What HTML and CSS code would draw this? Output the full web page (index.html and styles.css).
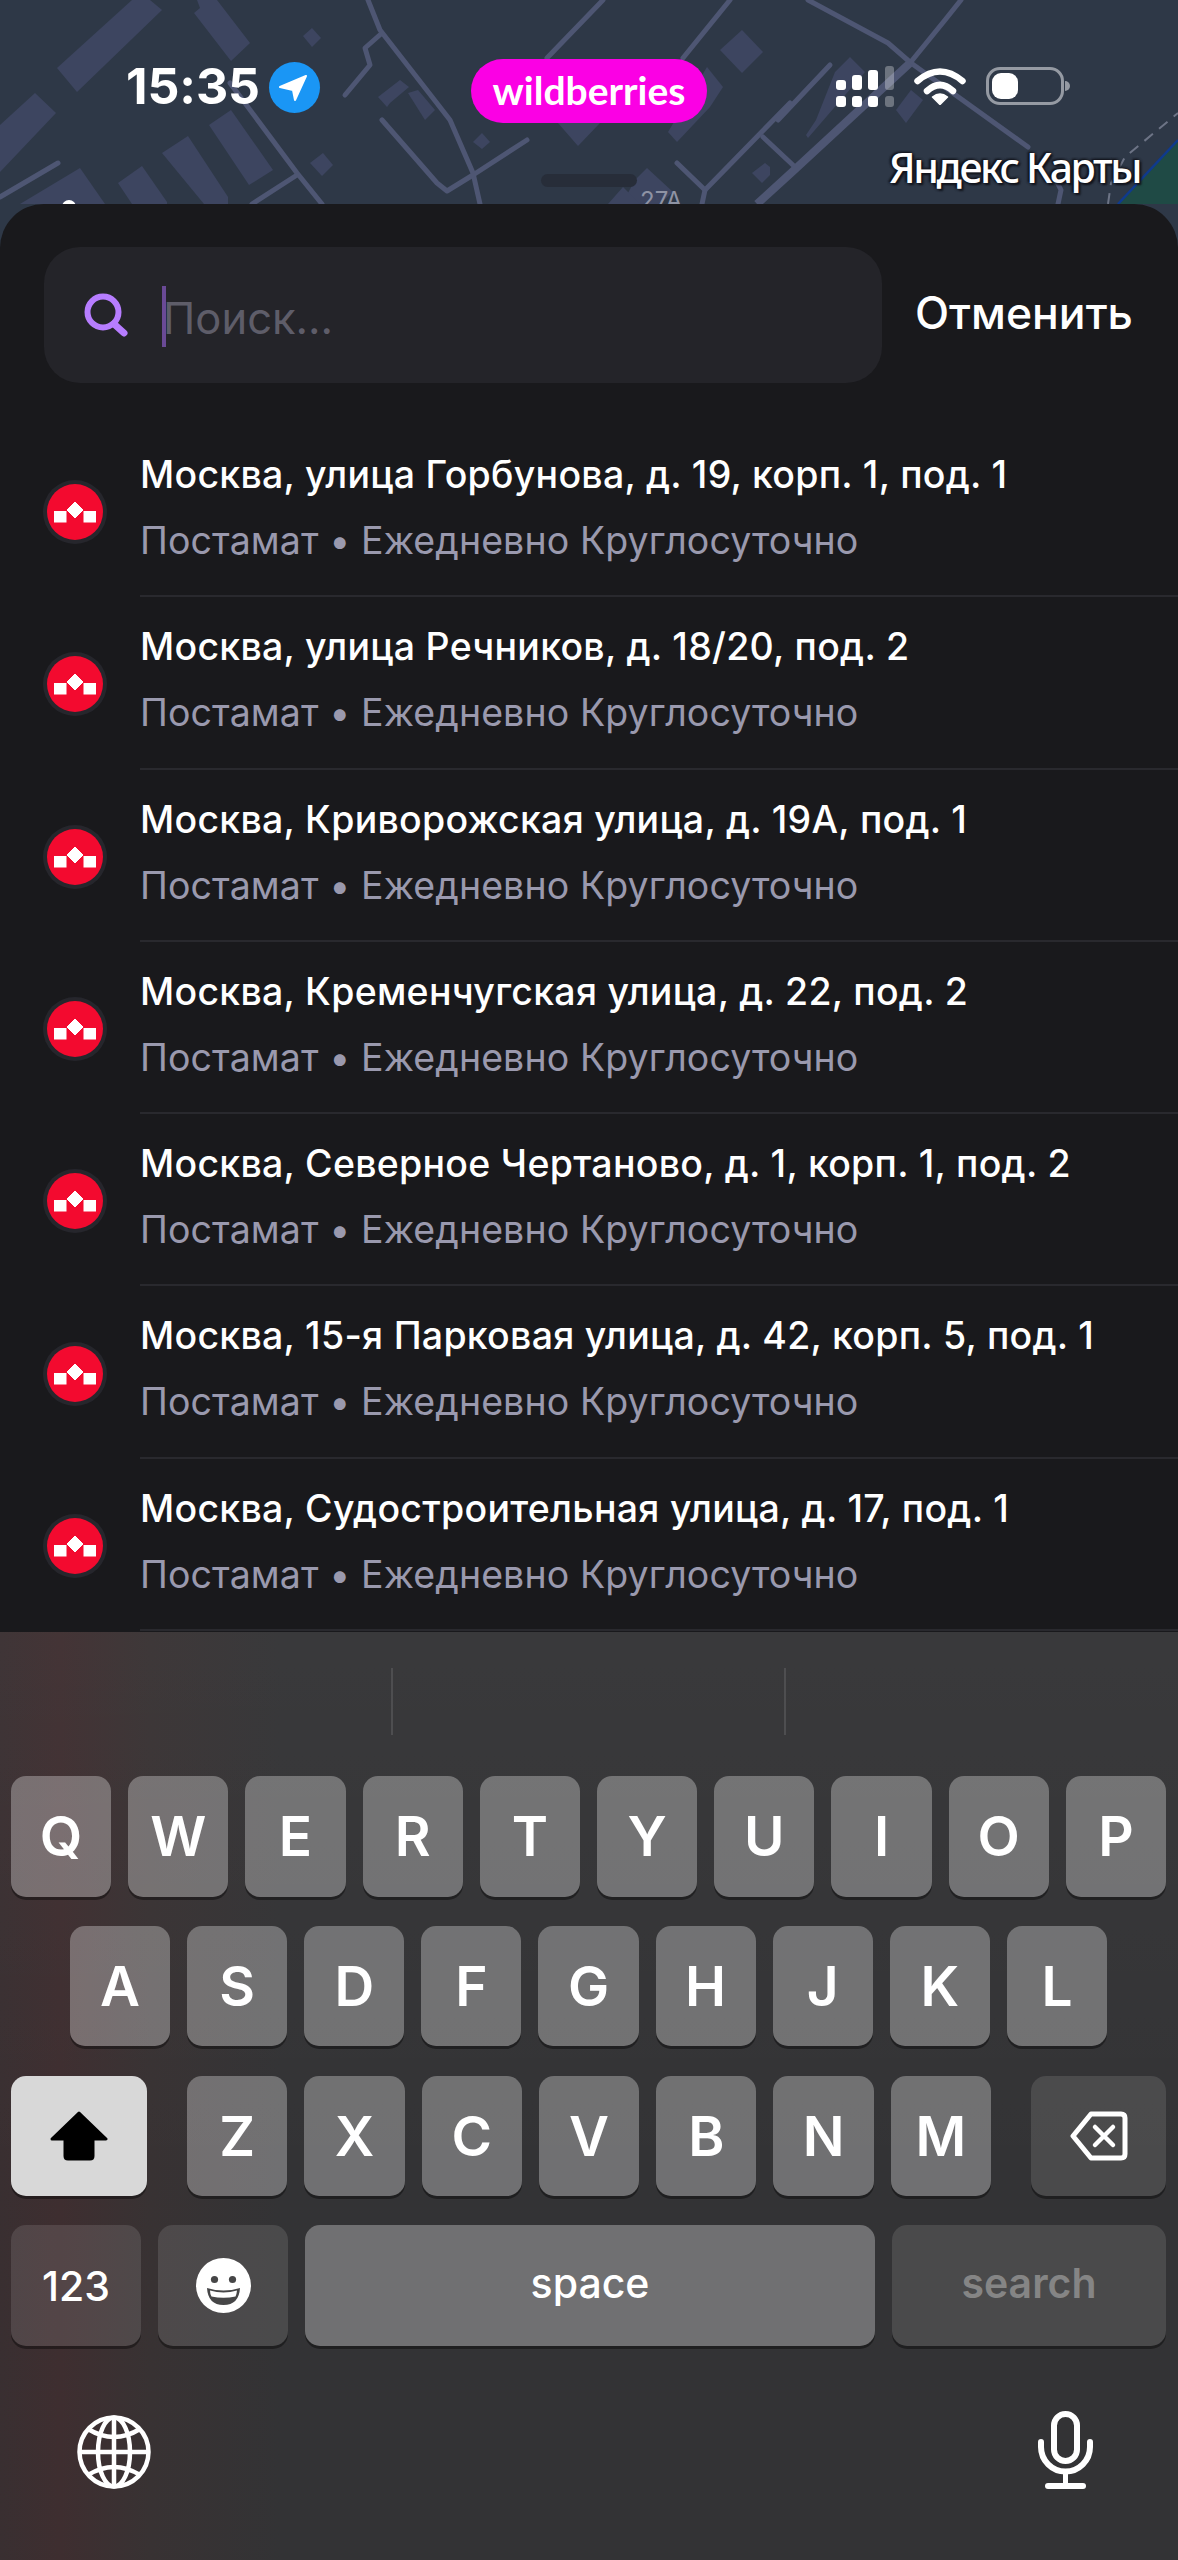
FILE: index.html
```html
<!DOCTYPE html>
<html lang="ru">
<head>
<meta charset="utf-8">
<title>Поиск</title>
<link rel="stylesheet" href="styles.css">
</head>
<body>
<svg class="defs" width="0" height="0">
  <symbol id="mark" viewBox="0 0 64 64">
    <circle cx="32" cy="32" r="32" fill="#26262c"/>
    <circle cx="32" cy="32" r="28" fill="#f30a2f"/>
    <rect x="11" y="31" width="12.500" height="11.500" fill="#fff"/>
    <rect x="40.500" y="31" width="12.500" height="11.500" fill="#fff"/>
    <path d="M32 22 L40 30 L32 38 L24 30 Z" fill="#fff" stroke="#fff" stroke-width="1" stroke-linejoin="round"/>
  </symbol>
</svg>
<main class="screen">
  <header class="top">
    <svg class="map" viewBox="0 0 1178 204" width="1178" height="204" aria-hidden="true">
      <g fill="#3d4560">
        <path d="M57 68 77 92 162 10 150 0H132Z"/>
        <path d="M194 13 200 8 197 0H217L250 43 231 61Z"/>
        <path d="M303 36 312 28 321 38 312 47Z"/>
        <path d="M0 125 35 93 56 113 0 172Z"/>
        <path d="M209 125 231 110 273 170 249 185Z"/>
        <path d="M162 153 188 136 228 197V204H204Z"/>
        <path d="M118 183 142 166 167 202V204H132Z"/>
        <path d="M20 204 80 168 105 204Z"/>
        <path d="M310 163 323 153 333 165 322 176Z"/>
        <path d="M378 97 400 80 409 87 390 103 387 107Z"/>
        <path d="M408 93 418 90 435 110 425 120Z"/>
        <path d="M473 142 482 133 490 142 482 149Z"/>
        <path d="M558 123H600L578 146Z"/>
        <path d="M720 50 742 30 763 52 742 73Z"/>
        <path d="M707 67 723 87 710 107 677 142 668 132Z"/>
        <path d="M752 173 765 163 770 167V175L762 183Z"/>
        <path d="M635 180 647 168 673 192 660 204H622Z"/>
        <path d="M608 204 623 187 640 204Z"/>
        <path d="M850 57 865 72 808 138 806 135 816 120 835 72Z"/>
        <path d="M911 90 923 100 906 123 896 110Z"/>
      </g>
      <g fill="none" stroke="#4e5673" stroke-width="5" stroke-linecap="round" stroke-linejoin="round">
        <path d="M0 197 58 163"/>
        <path d="M368 0 380 30 450 120 473 173 480 204"/>
        <path d="M382 33 365 48 370 65 345 95"/>
        <path d="M230 83 297 173 322 204"/>
        <path d="M297 175 252 204"/>
        <path d="M382 120 437 183 447 191 473 175 527 140"/>
        <path d="M547 58 603 0"/>
        <path d="M683 58 730 0"/>
        <path d="M677 163 705 190 790 103"/>
        <path d="M705 190 702 204"/>
        <path d="M763 137 795 167"/>
        <path d="M808 0 888 43 911 63 1028 147"/>
        <path d="M961 0 945 20 910 63"/>
        <path d="M830 65 778 120"/>
        <path d="M1058 204 1061 190 1055 178"/>
      </g>
      <path d="M910 63 791 173 757 204" fill="none" stroke="#4e5673" stroke-width="8"/>
      <path d="M1118 204 1178 140V204Z" fill="#1f4a45"/>
      <path d="M1118 204 1178 140" fill="none" stroke="#0f3a8e" stroke-width="2.5"/>
      <path d="M1108 204 1111 183 1125 157 1178 113" fill="none" stroke="#6d7486" stroke-width="2" stroke-dasharray="11 8"/>
      <circle cx="69" cy="207" r="7" fill="#fff"/>
      <text class="map-label" x="640" y="209">27A</text>
    </svg>
    <div class="status">
      <span class="time">15:35</span>
      <span class="loc">
        <svg viewBox="0 0 51 51" width="51" height="51"><path d="M37 14 11 25 24 28 26 38Z" fill="#fff" stroke="#fff" stroke-width="2" stroke-linejoin="round"/></svg>
      </span>
      <span class="pill">wildberries</span>
      <svg class="signal" viewBox="0 0 58 41" width="58" height="41">
        <g fill="#fff">
          <rect x="0" y="14" width="10" height="10" rx="3"/>
          <rect x="16" y="9" width="10" height="15" rx="3"/>
          <rect x="32" y="4" width="10" height="20" rx="3"/>
          <rect x="0" y="30" width="10" height="11" rx="3"/>
          <rect x="16" y="30" width="10" height="11" rx="3"/>
          <rect x="32" y="30" width="10" height="11" rx="3"/>
        </g>
        <g fill="#fff" opacity=".3">
          <rect x="49" y="0" width="9" height="24" rx="3"/>
          <rect x="49" y="30" width="9" height="11" rx="3"/>
        </g>
      </svg>
      <svg class="wifi" viewBox="0 0 52 38" width="52" height="38">
        <g fill="none" stroke="#fff" stroke-width="6.5" stroke-linecap="round">
          <path d="M3.5 14 Q26 -5 48.500 14"/>
          <path d="M13 24 Q26 12 39 24"/>
        </g>
        <path d="M18.500 30 Q26 24 33.500 30 L26 37.500Z" fill="#fff" stroke="#fff" stroke-width="1.500" stroke-linejoin="round"/>
      </svg>
      <span class="battery"><span class="battery-fill"></span></span>
      <span class="battery-nub"></span>
    </div>
    <span class="handle"></span>
    <span class="maps-brand">Яндекс Карты</span>
  </header>

  <section class="sheet">
    <div class="search-row">
      <div class="field">
        <svg class="search-icon" viewBox="0 0 44 44" width="44" height="44">
          <circle cx="19" cy="19" r="15.500" fill="none" stroke="#b77dff" stroke-width="6"/>
          <path d="M30 31 L40 40" stroke="#b77dff" stroke-width="7" stroke-linecap="round"/>
        </svg>
        <span class="caret"></span>
        <span class="placeholder">Поиск...</span>
      </div>
      <span class="cancel">Отменить</span>
    </div>
    <ul class="list">
      <li class="row">
        <svg class="mark" width="64" height="64"><use href="#mark"/></svg>
        <div class="row-body"><p class="addr">Москва, улица Горбунова, д. 19, корп. 1, под. 1</p><p class="meta">Постамат • Ежедневно Круглосуточно</p></div>
      </li>
      <li class="row">
        <svg class="mark" width="64" height="64"><use href="#mark"/></svg>
        <div class="row-body"><p class="addr">Москва, улица Речников, д. 18/20, под. 2</p><p class="meta">Постамат • Ежедневно Круглосуточно</p></div>
      </li>
      <li class="row">
        <svg class="mark" width="64" height="64"><use href="#mark"/></svg>
        <div class="row-body"><p class="addr">Москва, Криворожская улица, д. 19А, под. 1</p><p class="meta">Постамат • Ежедневно Круглосуточно</p></div>
      </li>
      <li class="row">
        <svg class="mark" width="64" height="64"><use href="#mark"/></svg>
        <div class="row-body"><p class="addr">Москва, Кременчугская улица, д. 22, под. 2</p><p class="meta">Постамат • Ежедневно Круглосуточно</p></div>
      </li>
      <li class="row">
        <svg class="mark" width="64" height="64"><use href="#mark"/></svg>
        <div class="row-body"><p class="addr">Москва, Северное Чертаново, д. 1, корп. 1, под. 2</p><p class="meta">Постамат • Ежедневно Круглосуточно</p></div>
      </li>
      <li class="row">
        <svg class="mark" width="64" height="64"><use href="#mark"/></svg>
        <div class="row-body"><p class="addr">Москва, 15-я Парковая улица, д. 42, корп. 5, под. 1</p><p class="meta">Постамат • Ежедневно Круглосуточно</p></div>
      </li>
      <li class="row">
        <svg class="mark" width="64" height="64"><use href="#mark"/></svg>
        <div class="row-body"><p class="addr">Москва, Судостроительная улица, д. 17, под. 1</p><p class="meta">Постамат • Ежедневно Круглосуточно</p></div>
      </li>
    </ul>
  </section>

  <section class="keyboard">
    <div class="suggest"><span></span><span></span><span></span></div>
    <div class="keys">
      <div class="kb-row">
        <span class="key">Q</span><span class="key">W</span><span class="key">E</span><span class="key">R</span><span class="key">T</span><span class="key">Y</span><span class="key">U</span><span class="key">I</span><span class="key">O</span><span class="key">P</span>
      </div>
      <div class="kb-row kb-row-home">
        <span class="key">A</span><span class="key">S</span><span class="key">D</span><span class="key">F</span><span class="key">G</span><span class="key">H</span><span class="key">J</span><span class="key">K</span><span class="key">L</span>
      </div>
      <div class="kb-row kb-row-shift">
        <span class="key key-shift">
          <svg viewBox="0 0 60 50" width="60" height="50"><path d="M30 2 57 28H44V45Q44 48 41 48H19Q16 48 16 45V28H3Z" fill="#000" stroke="#000" stroke-width="3" stroke-linejoin="round"/></svg>
        </span>
        <div class="letters"><span class="key">Z</span><span class="key">X</span><span class="key">C</span><span class="key">V</span><span class="key">B</span><span class="key">N</span><span class="key">M</span></div>
        <span class="key key-fn key-back">
          <svg viewBox="0 0 58 50" width="58" height="50"><path d="M21 3H51Q55 3 55 7V43Q55 47 51 47H21L3 25Z" fill="none" stroke="#fff" stroke-width="5" stroke-linejoin="round"/><path d="M25 16 43 34M43 16 25 34" stroke="#fff" stroke-width="4.500" stroke-linecap="round"/></svg>
        </span>
      </div>
      <div class="kb-row kb-row-bottom">
        <span class="key key-fn key-num">123</span>
        <span class="key key-fn key-num">
          <svg viewBox="0 0 55 55" width="55" height="55"><circle cx="27.500" cy="27.500" r="27.500" fill="#fff"/><circle cx="18.500" cy="21.500" r="3.600" fill="#464647"/><circle cx="36.500" cy="21.500" r="3.600" fill="#464647"/><path d="M11 30Q27.500 35 44 30Q43 47 27.500 47Q12 47 11 30Z" fill="#464647"/><path d="M14 32.500Q27.500 36.500 41 32.500Q40.500 37 39.500 38.500Q27.500 41 15.500 38.500Q14 36 14 32.500Z" fill="#fff"/></svg>
        </span>
        <span class="key key-space">space</span>
        <span class="key key-fn key-search">search</span>
      </div>
    </div>
    <div class="kb-tools">
      <svg viewBox="0 0 74 74" width="74" height="74" fill="none" stroke="#fff" stroke-width="4.500">
        <circle cx="37" cy="37" r="34.500"/>
        <ellipse cx="37" cy="37" rx="16" ry="34.500"/>
        <path d="M37 3V71M3 37H71"/>
        <path d="M11 14Q37 30 63 14M11 60Q37 44 63 60"/>
      </svg>
      <svg viewBox="0 0 55 78" width="55" height="78" fill="none" stroke="#fff" stroke-linecap="round">
        <rect x="16" y="3" width="23" height="47" rx="11.500" stroke-width="6"/>
        <path d="M3 31V36A24.500 24.500 0 0 0 52 36V31" stroke-width="6"/>
        <path d="M27.500 61V74" stroke-width="5"/>
        <path d="M10 75H45" stroke-width="6"/>
      </svg>
    </div>
  </section>
</main>
</body>
</html>
```
FILE: styles.css
```css
* { box-sizing: border-box; }
html, body { margin: 0; padding: 0; background: #19191c; }
body { font-family: Inter, "Noto Sans", sans-serif; }
.defs { position: absolute; }
p, ul { margin: 0; padding: 0; }
ul { list-style: none; }

.screen {
  width: 1178px;
  height: 2560px;
  display: flex;
  flex-direction: column;
  background: #2e3847;
  overflow: hidden;
}

/* map + status */
.top { position: relative; flex: 0 0 204px; height: 204px; }
.map { position: absolute; inset: 0; display: block; }
.map-label { font: 400 24px Inter, sans-serif; fill: #8e93a4; }
.status {
  position: relative;
  display: flex;
  align-items: flex-start;
  height: 204px;
  padding: 59px 0 0 126px;
}
.time {
  margin-top: -2px;
  font-size: 50px;
  line-height: 58px;
  font-weight: 700;
  color: #fff;
  width: 133px;
  letter-spacing: -.1px;
  white-space: nowrap;
}
.loc {
  margin: 3px 0 0 10px;
  width: 51px;
  height: 51px;
  border-radius: 50%;
  background: #1a96f5;
  display: block;
}
.loc svg { display: block; }
.pill {
  margin-left: 151px;
  width: 236px;
  height: 64px;
  border-radius: 32px;
  background: #fb00e4;
  color: #fff;
  font-family: Lato, sans-serif;
  font-size: 39px;
  font-weight: 700;
  line-height: 62px;
  text-align: center;
}
.signal { margin: 7px 0 0 129px; flex: none; }
.wifi { margin: 8px 0 0 20px; flex: none; }
.battery {
  margin: 8px 0 0 20px;
  width: 78px;
  height: 38px;
  border: 3px solid #959aa3;
  border-radius: 14px;
  padding: 3px;
  flex: none;
}
.battery-fill {
  display: block;
  width: 26px;
  height: 26px;
  border-radius: 9px;
  background: #fff;
}
.battery-nub {
  margin: 22px 0 0 1px;
  width: 5px;
  height: 10px;
  border-radius: 0 5px 5px 0;
  background: #959aa3;
  flex: none;
}
.handle {
  position: absolute;
  left: 541px;
  top: 174px;
  width: 96px;
  height: 13px;
  border-radius: 7px;
  background: #272d39;
}
.maps-brand {
  position: absolute;
  left: 889px;
  top: 141px;
  font-family: "Noto Sans", sans-serif;
  font-size: 41px;
  line-height: 52px;
  font-weight: 500;
  letter-spacing: -2.4px;
  color: #fff;
  white-space: nowrap;
  text-shadow: 0 0 3px #14161e, 0 0 3px #14161e, 2px 2px 2px #14161e, -2px -1px 2px #14161e;
}

/* sheet */
.sheet {
  flex: 0 0 1428px;
  height: 1428px;
  background: #19191c;
  border-radius: 44px 44px 0 0;
  overflow: hidden;
}
.search-row {
  display: flex;
  align-items: center;
  padding: 43px 0 0 44px;
}
.field {
  display: flex;
  align-items: center;
  width: 838px;
  height: 136px;
  border-radius: 36px;
  background: #242429;
  padding-left: 40px;
}
.search-icon { flex: none; }
.caret {
  flex: none;
  margin-left: 34px;
  width: 4px;
  height: 61px;
  background: #6a4a96;
  margin-top: 2px;
}
.placeholder {
  margin-left: -3px;
  font-size: 43.500px;
  color: #5e5d69;
  margin-top: 6px;
}
.cancel {
  margin-left: 33px;
  font-size: 44.500px;
  font-weight: 500;
  color: #fff;
  margin-top: -5px;
}
.list { padding-top: 42px; }
.row {
  display: flex;
  align-items: center;
  height: 172.3px;
  padding-left: 43px;
}
.mark { flex: none; display: block; margin: 2px 33px 0 0; }
.row-body {
  flex: 1;
  height: 100%;
  padding-top: 17px;
  border-bottom: 2px solid #29292e;
}
.addr, .meta {
  font-size: 37.500px;
  line-height: 66px;
  white-space: nowrap;
}
.addr { font-weight: 500; color: #fff; letter-spacing: .27px; }
.meta { font-weight: 400; color: #9a99ae; letter-spacing: .1px; }

/* keyboard */
.keyboard {
  flex: 1;
  background:
    linear-gradient(180deg, rgba(255,255,255,.03), rgba(255,255,255,0) 60%),
    linear-gradient(90deg, #392f31 0, #3e2e30 60px, #383233 150px, #333335 280px, #333335 100%);
}
.suggest {
  display: flex;
  height: 144px;
  padding-top: 36px;
}
.suggest span { height: 67px; width: 393px; }
.suggest span:first-child { width: 391px; }
.suggest span + span { border-left: 2px solid #4e4e50; }
.keys {
  display: flex;
  flex-direction: column;
  gap: 29.300px;
  padding: 0 12px 0 11px;
}
.kb-row {
  display: flex;
  gap: 17px;
  height: 120.500px;
}
.kb-row-home { padding: 0 59px; }
.kb-row-shift { gap: 40px; }
.letters { flex: 1; display: flex; gap: 17px; }
.key {
  flex: 1 1 0;
  display: flex;
  align-items: center;
  justify-content: center;
  border-radius: 15px;
  background: rgba(255,255,255,.3);
  box-shadow: 0 3px 0 rgba(0,0,0,.38);
  color: #fff;
  font-size: 55px;
  font-weight: 600;
}
.key-shift {
  flex: 0 0 136px;
  background: #d8d8d8;
}
.key-back { flex: 0 0 135px; }
.key-fn { background: rgba(255,255,255,.115); }
.key-num { flex: 0 0 130px; font-size: 41px; font-weight: 500; }
.key-space { flex: 0 0 570px; font-size: 41px; font-weight: 500; padding-bottom: 6px; }
.key-search {
  flex: 1;
  font-size: 41px;
  font-weight: 600;
  color: #858585;
  padding-bottom: 6px;
}
.kb-tools {
  display: flex;
  justify-content: space-between;
  align-items: flex-end;
  padding: 65px 85px 0 77px;
}
```
